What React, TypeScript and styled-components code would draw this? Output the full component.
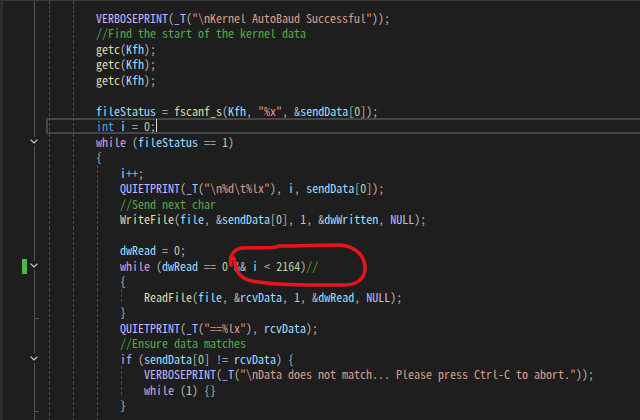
import React from "react";
import styled, { createGlobalStyle } from "styled-components";

const GlobalStyle = createGlobalStyle`
  html, body {
    margin: 0;
    padding: 0;
    background: #1e1e1e;
  }
`;

const COLORS: Record<string, string> = {
  p: "#b4b4b4",
  m: "#beb7ff",
  k: "#d8a0df",
  t: "#569cd6",
  f: "#dcdcaa",
  v: "#9cdcfe",
  n: "#b5cea8",
  s: "#d69d85",
  c: "#57a64a",
};

type Token = [string, string];

type Line = {
  level: number;
  tokens: Token[];
  fold?: "open" | "end";
  changed?: boolean;
  current?: boolean;
};

const p = (t: string): Token => ["p", t];
const m = (t: string): Token => ["m", t];
const k = (t: string): Token => ["k", t];
const f = (t: string): Token => ["f", t];
const v = (t: string): Token => ["v", t];
const n = (t: string): Token => ["n", t];
const s = (t: string): Token => ["s", t];
const c = (t: string): Token => ["c", t];

const LINES: Line[] = [
  { level: 2, tokens: [m("VERBOSEPRINT"), p("("), m("_T"), p("("), s('"\\nKernel AutoBaud Successful"'), p("));")] },
  { level: 2, tokens: [c("//Find the start of the kernel data")] },
  { level: 2, tokens: [f("getc"), p("("), v("Kfh"), p(");")] },
  { level: 2, tokens: [f("getc"), p("("), v("Kfh"), p(");")] },
  { level: 2, tokens: [f("getc"), p("("), v("Kfh"), p(");")] },
  { level: 2, tokens: [] },
  {
    level: 2,
    tokens: [v("fileStatus"), p(" = "), f("fscanf_s"), p("("), v("Kfh"), p(", "), s('"%x"'), p(", &"), v("sendData"), p("["), n("0"), p("]);")],
  },
  { level: 2, current: true, tokens: [["t", "int"], p(" "), v("i"), p(" = "), n("0"), p(";")] },
  { level: 2, fold: "open", tokens: [k("while"), p(" ("), v("fileStatus"), p(" == "), n("1"), p(")")] },
  { level: 2, tokens: [p("{")] },
  { level: 3, tokens: [v("i"), p("++;")] },
  {
    level: 3,
    tokens: [m("QUIETPRINT"), p("("), m("_T"), p("("), s('"\\n%d\\t%lx"'), p("), "), v("i"), p(", "), v("sendData"), p("["), n("0"), p("]);")],
  },
  { level: 3, tokens: [c("//Send next char")] },
  {
    level: 3,
    tokens: [f("WriteFile"), p("("), v("file"), p(", &"), v("sendData"), p("["), n("0"), p("], "), n("1"), p(", &"), v("dwWritten"), p(", "), m("NULL"), p(");")],
  },
  { level: 3, tokens: [] },
  { level: 3, tokens: [v("dwRead"), p(" = "), n("0"), p(";")] },
  {
    level: 3,
    fold: "open",
    changed: true,
    tokens: [k("while"), p(" ("), v("dwRead"), p(" == "), n("0"), p(" && "), v("i"), p(" < "), n("2164"), p(")"), c("//")],
  },
  { level: 3, tokens: [p("{")] },
  {
    level: 4,
    tokens: [f("ReadFile"), p("("), v("file"), p(", &"), v("rcvData"), p(", "), n("1"), p(", &"), v("dwRead"), p(", "), m("NULL"), p(");")],
  },
  { level: 3, fold: "end", tokens: [p("}")] },
  { level: 3, tokens: [m("QUIETPRINT"), p("("), m("_T"), p("("), s('"==%lx"'), p("), "), v("rcvData"), p(");")] },
  { level: 3, tokens: [c("//Ensure data matches")] },
  {
    level: 3,
    fold: "open",
    tokens: [k("if"), p(" ("), v("sendData"), p("["), n("0"), p("] != "), v("rcvData"), p(") {")],
  },
  {
    level: 4,
    tokens: [m("VERBOSEPRINT"), p("("), m("_T"), p("("), s('"\\nData does not match... Please press Ctrl-C to abort."'), p("));")],
  },
  { level: 4, tokens: [k("while"), p(" ("), n("1"), p(") {}")] },
  { level: 3, fold: "end", tokens: [p("}")] },
];

const Window = styled.div`
  position: relative;
  width: 640px;
  height: 420px;
  overflow: hidden;
  box-sizing: border-box;
  background: #1e1e1e;
  border-top: 1px solid #3a3a3a;
  border-left: 3px solid #2e2e2e;
  font-family: "Noto Sans Mono CJK SC", "Liberation Mono", monospace;
  font-size: 12px;
`;

const Row = styled.div<{ $h?: number }>`
  display: flex;
  height: ${(pr) => pr.$h ?? 15.5}px;
  line-height: ${(pr) => pr.$h ?? 15.5}px;
`;

const Margin = styled.div`
  display: flex;
  flex: 0 0 43px;
  padding-left: 19px;
  box-sizing: border-box;
`;

const ChangeBar = styled.div<{ $on?: boolean }>`
  width: 5px;
  margin: 1px 0 -1px;
  background: ${(pr) => (pr.$on ? "#4fb64f" : "transparent")};
`;

const Outline = styled.div<{ $kind?: string }>`
  width: 14px;
  display: flex;
  align-items: center;
  justify-content: center;
  background-repeat: no-repeat;
  ${(pr) =>
    pr.$kind === "open"
      ? `background-image: linear-gradient(#555, #555), linear-gradient(#555, #555);
         background-size: 1px 3px, 1px 3px;
         background-position: 6.5px 0, 6.5px 100%;`
      : pr.$kind === "end"
        ? `background-image: linear-gradient(#555, #555), linear-gradient(#555, #555);
           background-size: 1px 100%, 5px 1px;
           background-position: 6.5px 0, 6.5px 14px;`
        : `background-image: linear-gradient(#555, #555);
           background-size: 1px 100%;
           background-position: 6.5px 0;`}
`;

const Code = styled.div<{ $current?: boolean }>`
  flex: 1;
  display: flex;
  padding-left: 2px;
  white-space: pre;
  color: #b4b4b4;
  ${(pr) =>
    pr.$current &&
    "box-shadow: inset 2px 0 #464646, inset 0 2px #464646, inset 0 -2px #464646;"}
`;

const Indent = styled.span`
  flex: 0 0 24px;
  background-image: repeating-linear-gradient(to bottom, #4e4e4e 0 3px, transparent 3px 5px);
  background-size: 1px 100%;
  background-position: 1px 0;
  background-repeat: no-repeat;
`;

const Tok = styled.span<{ $kind: string }>`
  color: ${(pr) => COLORS[pr.$kind]};
`;

const Caret = styled.span`
  display: inline-block;
  width: 1px;
  height: 13px;
  margin-top: 1px;
  background: #dcdcdc;
`;

const Ink = styled.svg`
  position: absolute;
  left: -3px;
  top: -1px;
  pointer-events: none;
`;

function Chevron() {
  return (
    <svg width="8" height="5" viewBox="0 0 8 5">
      <polyline points="0.6,0.6 4,4 7.4,0.6" fill="none" stroke="#cfcfcf" strokeWidth="1.2" />
    </svg>
  );
}

function EditorRow({ line, h }: { line: Line; h?: number }) {
  return (
    <Row $h={h}>
      <Margin>
        <ChangeBar $on={line.changed} />
        <Outline $kind={line.fold}>{line.fold === "open" && <Chevron />}</Outline>
      </Margin>
      <Code $current={line.current}>
        {Array.from({ length: line.level }).map((_, i) => (
          <Indent key={i} />
        ))}
        {line.tokens.map(([kind, text], i) => (
          <Tok key={i} $kind={kind}>
            {text}
          </Tok>
        ))}
        {line.current && <Caret />}
      </Code>
    </Row>
  );
}

export default function App() {
  return (
    <>
      <GlobalStyle />
      <Window>
        <EditorRow line={{ level: 2, tokens: [] }} h={8.5} />
        {LINES.map((line, i) => (
          <EditorRow key={i} line={line} />
        ))}
        <EditorRow line={{ level: 3, tokens: [] }} />
        <Ink width="640" height="420" viewBox="0 0 640 420">
          <path
            d="M231 265 C 229 255, 234 249, 242 248 C 262 247, 275 249, 278 246 C 300 246, 320 245, 340 245 C 355 246, 366 256, 365 270 C 364 280, 355 286, 340 285 C 312 285, 275 286, 252 281 C 241 279, 236 273, 234 258"
            fill="none"
            stroke="#e8141c"
            strokeWidth="3.5"
            strokeLinecap="round"
            strokeLinejoin="round"
          />
        </Ink>
      </Window>
    </>
  );
}
